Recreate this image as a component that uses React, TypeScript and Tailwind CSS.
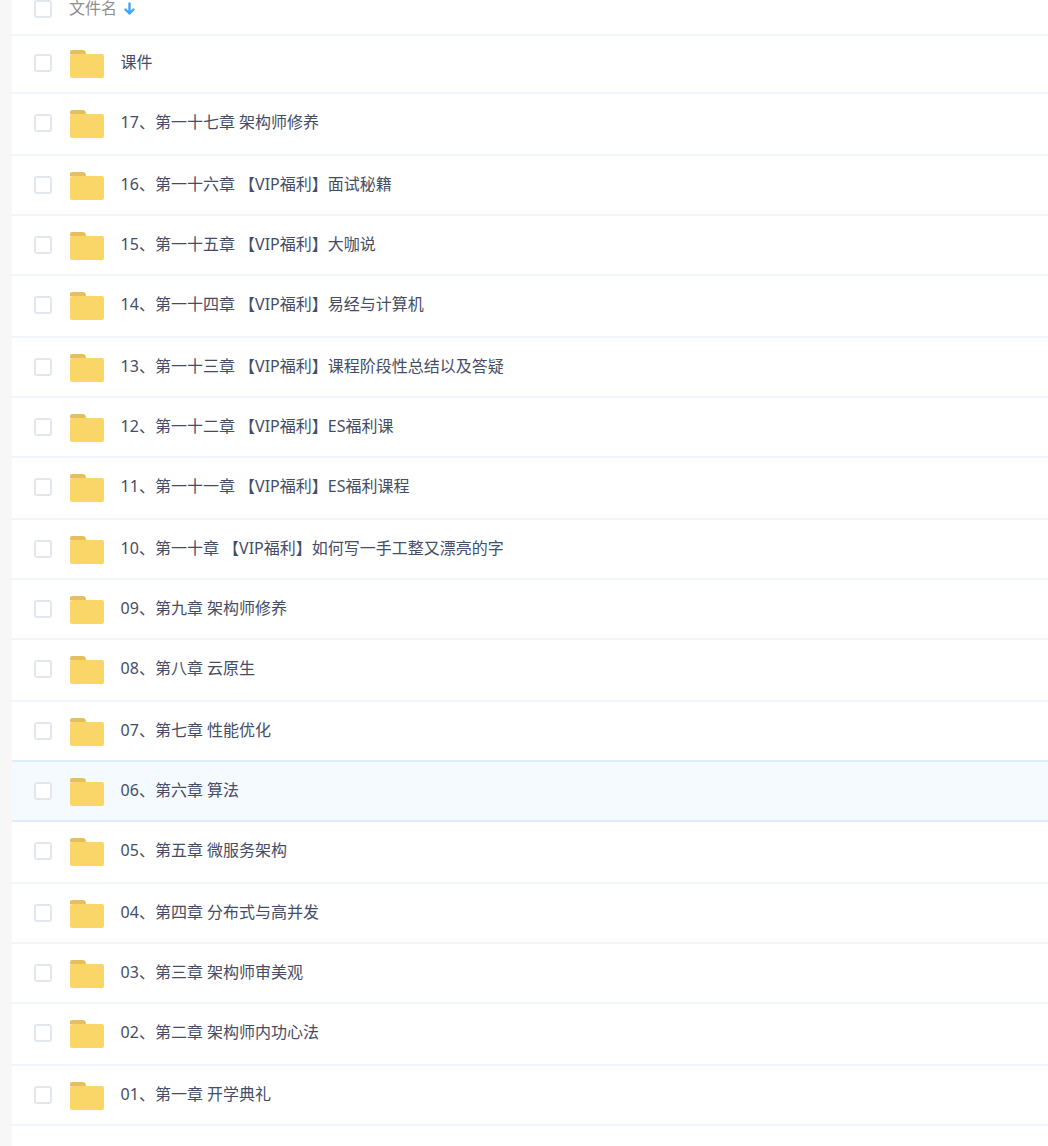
const folders = [
  '课件',
  '17、第一十七章 架构师修养',
  '16、第一十六章 【VIP福利】面试秘籍',
  '15、第一十五章 【VIP福利】大咖说',
  '14、第一十四章 【VIP福利】易经与计算机',
  '13、第一十三章 【VIP福利】课程阶段性总结以及答疑',
  '12、第一十二章 【VIP福利】ES福利课',
  '11、第一十一章 【VIP福利】ES福利课程',
  '10、第一十章 【VIP福利】如何写一手工整又漂亮的字',
  '09、第九章 架构师修养',
  '08、第八章 云原生',
  '07、第七章 性能优化',
  '06、第六章 算法',
  '05、第五章 微服务架构',
  '04、第四章 分布式与高并发',
  '03、第三章 架构师审美观',
  '02、第二章 架构师内功心法',
  '01、第一章 开学典礼',
]

function Checkbox() {
  return <div className="w-[18px] h-[18px] shrink-0 rounded-[3px] border-2 border-[#e2e7ee] bg-white" />
}

function FolderIcon() {
  return (
    <svg className="shrink-0" width="34" height="28" viewBox="0 0 34 28">
      <path d="M0 2a2 2 0 0 1 2-2h11a3 3 0 0 1 2.5 1.5L16 4H0z" fill="#e3bf62" />
      <path d="M0 6a2 2 0 0 1 2-2h30a2 2 0 0 1 2 2v20a2 2 0 0 1-2 2H2a2 2 0 0 1-2-2z" fill="#fad669" />
    </svg>
  )
}

function rowHeight(i: number) {
  if (i === 0) return 'h-[58px] pt-[14px]'
  return i % 3 === 1 ? 'h-[62px] pt-[16px]' : 'h-[60px] pt-[16px]'
}

export default function App() {
  return (
    <div className="flex h-[1146px] overflow-hidden bg-[#f7f7f7] pl-3 font-['Noto_Sans','Noto_Sans_CJK_SC',sans-serif]">
      <div className="flex-1 bg-white">
        <div className="flex h-[36px] items-start border-b-2 border-[#f2f5fb] pl-[22px]">
          <Checkbox />
          <span className="ml-[17px] -mt-[1px] text-base leading-[18px] text-[#8f8f8f]">文件名</span>
          <svg className="ml-[6px] mt-[2px]" width="13" height="13" viewBox="0 0 13 13" fill="none" stroke="#42a5f5" strokeWidth="2.4" strokeLinecap="round" strokeLinejoin="round">
            <path d="M6.5 1.5v10M2.5 7.5l4 4 4-4" />
          </svg>
        </div>
        {folders.map((name, i) => (
          <div
            key={name}
            className={`flex items-start border-b-2 pl-[22px] ${rowHeight(i)} ${i === 12 ? 'bg-[#f5faff]' : ''} ${i === 11 || i === 12 ? 'border-[#deebfb]' : 'border-[#f2f5fb]'}`}
          >
            <div className="mt-[4px]"><Checkbox /></div>
            <div className="ml-[18px]"><FolderIcon /></div>
            <span className="ml-[16.6px] text-base leading-[24px] text-[#454d66]">{name}</span>
          </div>
        ))}
      </div>
    </div>
  )
}
